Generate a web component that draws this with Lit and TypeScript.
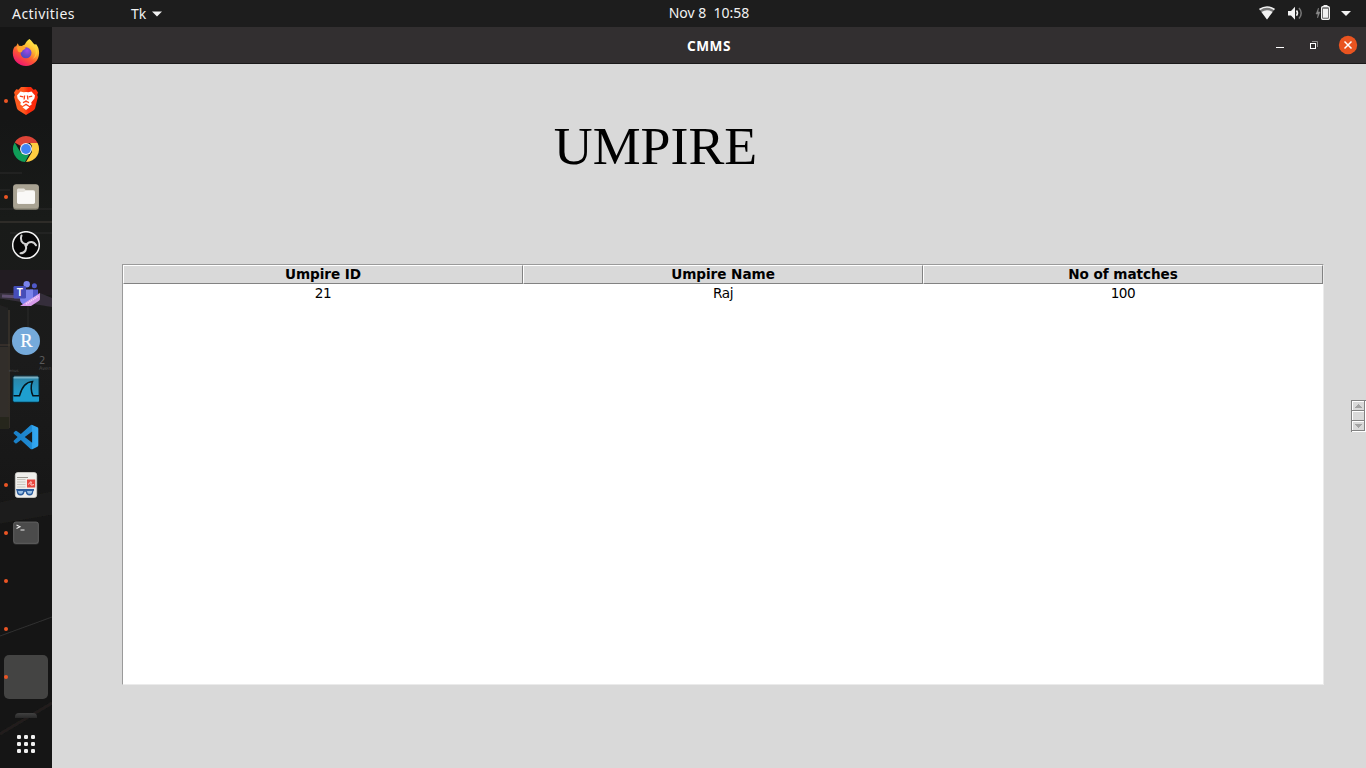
import { LitElement, html, css, svg, nothing } from "lit";
import { customElement } from "lit/decorators.js";

const firefox = svg`
  <defs>
    <linearGradient id="ffa" x1=".8" y1=".05" x2=".25" y2=".95"><stop offset="0" stop-color="#fff44f"/><stop offset=".35" stop-color="#ffb52e"/><stop offset=".65" stop-color="#ff5634"/><stop offset="1" stop-color="#ee1572"/></linearGradient>
    <radialGradient id="ffb" cx=".6" cy=".3" r=".7"><stop offset="0" stop-color="#a04be8"/><stop offset=".5" stop-color="#7648cf"/><stop offset="1" stop-color="#4c4bc0"/></radialGradient>
  </defs>
  <g transform="translate(0 -.9)">
  <path fill="url(#ffa)" d="M17.500 1c2.600 2 3.200 4.200 5.500 5.600l1-.6c2.100 2.400 3.200 5.400 3.100 9C27 22.500 21.300 28 14 28S.8 22.500.8 15c0-3.200 1-5.600 2.600-7.300L3.700 9 5.800 5.200l1.100 2.500 2.700.2 3.200-1.600C14 4 15.500 2 17.500 1z"/>
  <circle cx="14" cy="14.700" r="5.500" fill="url(#ffb)"/>
  <path fill="#ffa32b" d="M5 9.500c2-1.700 4-1.700 5.700-.8l3 .7c.1 1.800-2.500 1.900-3.500 3.700-.6 1.500-2.600 1.500-4.200.4z"/>
  <path fill="#ffd83f" d="M17.500 2c-.8 3.800 6.500 6 6.300 12.500-.2 3.500-2.200 5.800-4 7 6.600-2.600 6.300-10 3.200-14.500C21 6.500 19 4.500 17.500 2z" opacity=".75"/>
  </g>`;

const brave = svg`
  <defs><linearGradient id="bra"><stop offset=".4" stop-color="#ff5a1f"/><stop offset=".6" stop-color="#fb2a0c"/></linearGradient></defs>
  <path fill="url(#bra)" d="M9 0h10l2.500 2.700 2.300-.4 2.200 3.300-.8 2.400.7 2-2.800 11.200c-.3 1-1 1.800-1.800 2.400L14 28l-7.300-4.400c-.9-.6-1.500-1.400-1.800-2.400L2.100 10l.7-2L2 5.600l2.200-3.300 2.300.4z"/>
  <path fill="#fff" d="M8.500 4.500l3.200.8 2.300-.3 2.300.3 3.200-.8 3.500 4-.6 3-3.200 4 .5 2-2.200 1.600L14 16.600l-3.500 2.500-2.200-1.600.5-2-3.200-4-.6-3z"/>
  <path fill="none" stroke="#fd4218" stroke-width="1.300" d="M7.800 9.200l3.500.6M20.200 9.200l-3.500.6M12.600 8.500l-.5 4M15.400 8.500l.5 4M11 15.600l3-1.400 3 1.400M14 13.200v2"/>
  <path fill="#fff" d="M14 18.300l3.500 1.900-3.500 2.700-3.500-2.700z"/>`;

const chrome = svg`
  <path fill="#dc4437" d="M14 14L2.700 7.500A13 13 0 0 1 25.300 7.500L25.600 8H14z"/>
  <path fill="#ffcd40" d="M14 27l6-10 0-6-2-3h7.600A13 13 0 0 1 14 27z"/>
  <path fill="#0f9d58" d="M2.700 7.500L8.300 17l5.700 3 3-.2-4 7.200A13 13 0 0 1 2.700 7.500z"/>
  <circle cx="14" cy="14" r="6" fill="#f1f1f1"/><circle cx="14" cy="14" r="4.900" fill="#4285f4"/>`;

const files = svg`
  <rect x="1.200" y="1.700" width="25.600" height="25" rx="3" fill="#8d8878"/>
  <rect x="1.200" y="1.200" width="25.600" height="24" rx="3" fill="#a9a393"/>
  <path fill="#e6e3dc" d="M5 7.200c0-1.200.6-1.800 1.700-1.800h4.600c.9 0 1.300.3 1.700 1l.6.700H21c1.300 0 2 .7 2 2v10c0 1.300-.7 2-2 2H7c-1.300 0-2-.7-2-2z"/>
  <path fill="#faf9f7" d="M5 11c0-1.300.7-2 2-2h3.500c1.200 0 1.500-.2 2.200-.8.400-.2.700-.2 1.300-.2h7c1.300 0 2 .7 2 2v9c0 1.200-.7 1.800-2 1.800H7c-1.300 0-2-.6-2-1.800z"/>`;

const obs = svg`
  <circle cx="14" cy="14" r="13.300" fill="#060606" stroke="#f4f4f4" stroke-width="1.500"/>
  <g fill="none" stroke="#d4d4d4" stroke-width="2" stroke-linecap="round">
    <path d="M9.500 4.500c-2 4.200.5 8 4.500 8.700"/>
    <path d="M24 14.300c-2.300-4.500-7.400-4-9.300-.6"/>
    <path d="M8.500 22.300c4.700-.2 6.700-4.300 5.200-7.800"/>
  </g>
  <circle cx="14" cy="14" r="1.700" fill="#d4d4d4"/>`;

const teams = svg`
  <g transform="translate(0 2)">
  <circle cx="14.700" cy="3.200" r="3.200" fill="#7b83eb"/><circle cx="22.400" cy="4.800" r="2.500" fill="#5059c9"/>
  <path fill="#5059c9" d="M18 8.500h8v8c0 3-3 5-6 4z"/><path fill="#7b83eb" d="M8 8.500h13V18c0 8-13 8-13 0z"/>
  <rect x="1.500" y="5" width="12.500" height="12.500" rx="1.300" fill="#464eb8"/>
  <text x="7.800" y="15" font-family="Liberation Sans" font-weight="700" font-size="10" fill="#fff" text-anchor="middle">T</text>
  <path fill="#d79beb" d="M8 25L28 12v5.500c0 1.200-.4 1.900-1.300 2.500L19 25z"/>
  <path d="M14 23L26.500 15" stroke="#f7e5ff" stroke-width="2" stroke-dasharray="1.300 .7" opacity=".75"/>
  </g>`;

const rstudio = svg`
  <circle cx="14" cy="14" r="14" fill="#75aadb"/>
  <text x="14.300" y="20" font-family="Liberation Serif" font-size="18.500" fill="#fff" stroke="#fff" stroke-width=".2" text-anchor="middle">R</text>`;

const shark = svg`
  <defs><linearGradient id="wsa" x2="0" y2="1"><stop offset="0" stop-color="#b5d5df"/><stop offset=".14" stop-color="#2a87ab"/><stop offset="1" stop-color="#1ba6dc"/></linearGradient></defs>
  <rect x=".8" y=".8" width="26.400" height="26.400" rx="1.800" fill="url(#wsa)" stroke="#06222e" stroke-width="1.200"/>
  <path d="M1.500 20.800h6C9.500 13 14 7 20.500 6.500c-2 4-1.600 10.300.5 14.300h6v5.700H1.500z" fill="#1e9fd0"/>
  <path d="M1.500 20.800h6C9.500 13 14 7 20.500 6.500c-2 4-1.600 10.300.5 14.300h6" fill="none" stroke="#06151c" stroke-width="1.500"/>`;

const vscode = svg`
  <defs><linearGradient id="vsa"><stop offset="0" stop-color="#1a7fc6"/><stop offset=".72" stop-color="#1f8ad2"/><stop offset=".76" stop-color="#2ea2ec"/><stop offset="1" stop-color="#35a9f2"/></linearGradient></defs>
  <path transform="translate(1.600 1.700) scale(.247)" fill="url(#vsa)" fill-rule="evenodd" d="M96.460 10.800L75.860.88a6.200 6.200 0 0 0-7.100 1.200L29.300 38.040 12.190 25.060a4.160 4.160 0 0 0-5.310.23L1.360 30.300a4.170 4.170 0 0 0 0 6.160L16.210 50 1.360 63.540a4.170 4.170 0 0 0 0 6.160l5.510 5.010a4.160 4.160 0 0 0 5.310.23L29.300 61.960l39.460 35.960a6.200 6.200 0 0 0 7.100 1.200l20.600-9.910A6.250 6.250 0 0 0 100 83.600V16.400a6.250 6.250 0 0 0-3.540-5.600zM75 72.700L45.110 50 75 27.300z"/>`;

const reader = svg`
  <rect x="3.300" y="1.500" width="21.400" height="25" rx="2.500" fill="#efeeeb" stroke="#d2d0cc" stroke-width=".8"/>
  <path d="M5 8.500h8.500M5 11h8.500M5 13.500h8.500M5 16h8.500" stroke="#c9c7c0" stroke-width="1.200"/>
  <path d="M5 6.500h11" stroke="#98958d"/>
  <rect x="15" y="8.500" width="8.200" height="8" fill="#e8473f"/><path d="M16.500 13.500c2-3.500 3.500-3.500 2.500-1s1.500 1.500 3 1" fill="none" stroke="#fff" stroke-width=".8"/>
  <path d="M4 18h18v1.500l-.7.700c-.3 3-1.200 4.300-3.700 4.300s-3.500-1.300-3.900-3.800h-1.200c-.4 2.500-1.400 3.800-3.900 3.800s-3.600-1.300-3.900-4.300z" fill="#2c5d9d"/>
  <path d="M6 19.900h5.200c-.3 2-1.100 2.900-2.600 2.900s-2.400-.9-2.600-2.900zM15 19.900h5.200c-.2 2-1 2.900-2.500 2.900s-2.400-.9-2.700-2.900z" fill="#9bc0e4"/>`;

const terminal = svg`
  <rect x="1.200" y="3" width="25.600" height="22.500" rx="2.500" fill="#383838"/>
  <rect x="1.700" y="3" width="24.600" height="21.300" rx="2.200" fill="#4b4b4b" stroke="#686868" stroke-width=".8"/>
  <path d="M4.500 6l3.500 1.700-3.500 1.700M8.500 11h4" fill="none" stroke="#eee" stroke-width="1.100"/>`;

interface Launcher { art: unknown; running?: boolean; active?: boolean }
const launchers: Launcher[] = [
  { art: firefox }, { art: brave, running: true }, { art: chrome },
  { art: files, running: true }, { art: obs }, { art: teams }, { art: rstudio },
  { art: shark }, { art: vscode }, { art: reader, running: true },
  { art: terminal, running: true }, { art: nothing, running: true },
  { art: nothing, running: true }, { art: nothing, running: true, active: true },
];

@customElement("top-bar")
class TopBar extends LitElement {
  static styles = css`
    :host { display: grid; grid-template-columns: 1fr auto 1fr; align-items: center; height: 27px; background: #1d1d1d; color: #f2f2f2; font: 14px/26px "Noto Sans", sans-serif; }
    .left { display: flex; padding-left: 12px; }
    .act { width: 119px; letter-spacing: .46px; }
    .app { display: flex; align-items: center; gap: 6px; }
    .clock { white-space: pre; letter-spacing: 0; padding-left: 52px; line-height: 25px; padding-bottom: 2px; }
    .right { display: flex; justify-content: flex-end; }
    svg { display: block; }
  `;
  render() {
    return html`
      <div class="left"><span class="act">Activities</span><span class="app">Tk
        <svg width="10" height="6"><path d="M0 .5h10L5 5.500z" fill="#f2f2f2"/></svg></span></div>
      <div class="clock">Nov 8  10:58</div>
      <div class="right">
        <svg width="110" height="27" viewBox="1256 0 110 27">
          <path d="M1259.500 9.500Q1267 4.500 1274.500 9.500L1267 19.500z" fill="#777"/>
          <path d="M1259.500 9.500Q1267 4.500 1274.500 9.500" fill="none" stroke="#f2f2f2" stroke-width="1.600"/>
          <path d="M1261.500 12Q1267 8.500 1272.500 12L1267 19.500z" fill="#f2f2f2"/>
          <path d="M1288 11h3l4-4.300v13l-4-4.200h-3z" fill="#f2f2f2"/>
          <path d="M1296.500 10.500q2 2.600 0 5.200" fill="none" stroke="#f2f2f2" stroke-width="1.500"/>
          <path d="M1299 8q4.500 5.200 0 10.400" fill="none" stroke="#777" stroke-width="1.500"/>
          <path d="M1318.500 8l-2.500 6h2l-.5 4 2.500-6h-2z" fill="#888" stroke="#888" stroke-width=".5"/>
          <path d="M1323.500 5h4v2h-4z" fill="#f2f2f2"/>
          <rect x="1321.700" y="6.700" width="7.600" height="12.600" rx="1" fill="none" stroke="#f2f2f2" stroke-width="1.400"/>
          <rect x="1323" y="8.500" width="5" height="9.300" fill="#f2f2f2"/>
          <path d="M1341 11h10l-5 5z" fill="#f2f2f2"/>
        </svg>
      </div>`;
  }
}

@customElement("app-dock")
class AppDock extends LitElement {
  static styles = css`
    :host { display: flex; flex-direction: column; align-items: center; width: 52px; background: #151515; position: relative; overflow: hidden; }
    .photo { position: absolute; inset: 0; }
    .list { position: relative; display: flex; flex-direction: column; gap: 4px; padding-top: 4px; }
    .item { position: relative; display: grid; place-items: center; box-sizing: border-box; width: 44px; height: 44px; border-radius: 5px; }
    .active { background: #444443; }
    .dot { position: absolute; left: 0; top: 20px; width: 4px; height: 4px; border-radius: 50%; background: #ec5524; }
    .sep { position: relative; width: 22px; height: 5px; margin-top: 14px; border-radius: 4px 4px 0 0; background: linear-gradient(#414141, #292929); }
    .grid { position: relative; display: block; margin-top: 17px; }
    svg { display: block; }
  `;
  render() {
    return html`
      <svg class="photo" width="52" height="741" viewBox="0 27 52 741">
        <defs>
          <linearGradient id="mid" x2="0" y2="1"><stop offset="0" stop-color="#151616"/><stop offset=".25" stop-color="#191b19"/><stop offset=".6" stop-color="#1b1b1b"/><stop offset="1" stop-color="#161616"/></linearGradient>
          <filter id="soft"><feGaussianBlur stdDeviation=".7"/></filter>
        </defs>
        <rect y="120" width="52" height="400" fill="url(#mid)"/>
        <g filter="url(#soft)">
          <path d="M0 173h22M0 190h10M0 209h52M10 233h42" stroke="#2e2f2a"/>
          <path d="M0 222h52" stroke="#413f36" stroke-width="1.200"/>
          <path d="M-3 270h58v25H-3z" fill="#211f21"/>
          <path d="M-3 293h43l12 5v9l-55-9z" fill="#352f3a"/>
          <path d="M2 296l38 2" stroke="#5f5070" stroke-width="3"/>
          <path d="M-3 304l11 4v40H-3z" fill="#242123"/>
          <path d="M-3 347H8v70H-3z" fill="#312e2b"/>
          <path d="M9 310v118M0 345h10" stroke="#443e35" stroke-width="1.200"/>
          <path d="M-3 417H9v12H-3z" fill="#28261d"/>
          <path d="M28 303v50" stroke="#2b292c"/>
          <path d="M-3 503l58-12v23L-3 524z" fill="#1f1e1b"/>
          <path d="M0 636L52 617" stroke="#303030"/>
          <path d="M0 734L52 703" stroke="#201f1c" stroke-width="3"/>
        </g>
        <text x="39" y="364" font-family="DejaVu Sans" font-size="10" fill="#5a5a5a">2</text>
        <text x="39" y="370" font-family="DejaVu Sans" font-size="5" fill="#4a4a4a">Aven</text>
        <text x="9" y="372" font-family="DejaVu Sans" font-size="4" fill="#4a4a4a">enus</text>
      </svg>
      <div class="list">
        ${launchers.map((l) => html`<div class="item ${l.active ? "active" : ""}">
          <svg width="28" height="28" viewBox="0 0 28 28">${l.art}</svg>
          ${l.running ? html`<span class="dot"></span>` : nothing}
        </div>`)}
      </div>
      <div class="sep"></div>
      <svg class="grid" width="18" height="18" fill="#f0f0f0">
        ${[0, 1, 2].map((r) => [0, 1, 2].map((c) => svg`<rect x=${c * 7} y=${r * 7} width="4" height="4" rx="1.300"/>`))}
      </svg>`;
  }
}

@customElement("title-bar")
class TitleBar extends LitElement {
  static styles = css`
    :host { display: grid; grid-template-columns: 1fr auto 1fr; height: 37px; box-sizing: border-box; border-bottom: 1px solid #1a1919; background: #322f30; color: #fff; }
    .name { font: 700 13.600px/37px "Noto Sans", sans-serif; letter-spacing: .5px; height: 36px; }
    .btns { display: flex; justify-content: flex-end; }
    svg { display: block; }
  `;
  render() {
    return html`<span></span><span class="name">CMMS</span>
      <div class="btns"><svg width="100" height="36" viewBox="1266 27 100 36">
        <path d="M1276 47h8v1h-8z" fill="#fff"/>
        <path d="M1312 41.500h5.500v5.500" fill="none" stroke="#8c8a8a"/>
        <rect x="1310.500" y="43.500" width="5" height="5" fill="none" stroke="#fff"/>
        <circle cx="1348" cy="45" r="9.200" fill="#e95420"/>
        <path d="M1344.500 41.500l7 7m0-7l-7 7" stroke="#fff" stroke-width="1.500"/>
      </svg></div>`;
  }
}

@customElement("umpire-table")
class UmpireTable extends LitElement {
  static styles = css`
    :host { display: flex; flex-direction: column; box-sizing: border-box; width: 1202px; height: 421px; border: 1px solid; border-color: #9a9a9a #ebebeb #ebebeb #9a9a9a; background: #fff; color: #000; font: 13.600px/19px "DejaVu Sans", sans-serif; letter-spacing: -.4px; }
    .row { display: grid; grid-template-columns: repeat(3, 400px); text-align: center; }
    .th { box-sizing: border-box; height: 19px; line-height: 17px; font-weight: 700; letter-spacing: -.05px; background: #d9d9d9; border: 1px solid; border-color: #fff #828282 #828282 #fff; }
  `;
  heads = ["Umpire ID", "Umpire Name", "No of matches"];
  rows = [["21", "Raj", "100"]];
  render() {
    return html`<div class="row">${this.heads.map((h) => html`<div class="th">${h}</div>`)}</div>
      ${this.rows.map((r) => html`<div class="row">${r.map((v) => html`<div>${v}</div>`)}</div>`)}`;
  }
}

@customElement("app-root")
class AppRoot extends LitElement {
  static styles = css`
    :host { display: flex; flex-direction: column; width: 1366px; height: 768px; overflow: hidden; background: #d9d9d9; }
    .body { display: flex; flex: 1; }
    .window { display: flex; flex-direction: column; flex: 1; }
    .client { display: flex; flex: 1; justify-content: space-between; }
    .main { padding-left: 70px; }
    .title { margin: 52px 0 0; width: 1067px; text-align: center; font: 400 53.800px/61px "Liberation Serif", serif; color: #000; }
    .tbl { margin-top: 87px; }
    .bar { display: block; margin-top: 336px; }
  `;
  render() {
    return html`<top-bar></top-bar>
      <div class="body"><app-dock></app-dock>
        <div class="window"><title-bar></title-bar>
          <div class="client">
            <div class="main"><h1 class="title">UMPIRE</h1><umpire-table class="tbl"></umpire-table></div>
            <svg class="bar" width="15" height="32" shape-rendering="crispEdges">
              <path d="M0 0h15v32H0z" fill="#fff"/><path d="M0 0h15v1H1v31H0z" fill="#828282"/>
              ${[1, 11, 21].map((y) => svg`<rect x="1" y=${y} width="13" height="10" fill="#828282"/><rect x="1" y=${y} width="12" height="9" fill="#fff"/><rect x="2" y=${y + 1} width="11" height="8" fill="#d9d9d9"/>`)}
              <path d="M7 4h1v1h1v1h1v1h1v1H4V7h1V6h1V5h1zM4 24h7v1h-1v1H9v1H8v1H7v-1H6v-1H5v-1H4z" fill="#a3a3a3"/>
            </svg>
          </div>
        </div>
      </div>`;
  }
}
